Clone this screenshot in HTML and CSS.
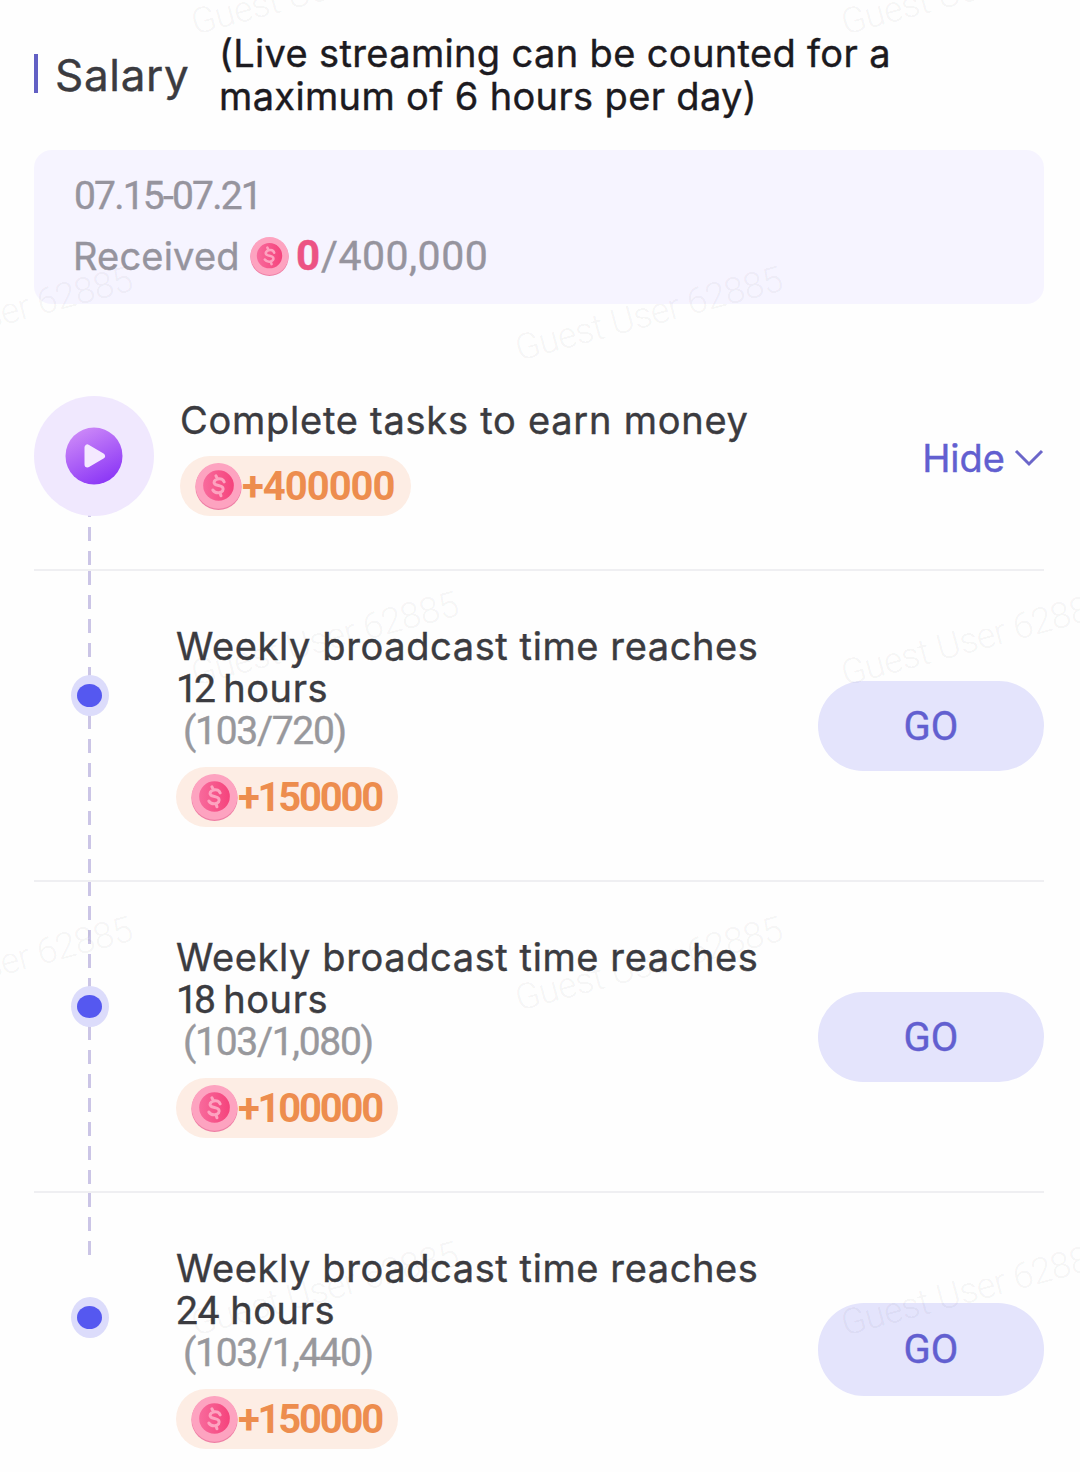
FILE: index.html
```html
<!DOCTYPE html>
<html lang="en">
<head>
    <meta charset="UTF-8">
    <meta name="viewport" content="width=device-width, initial-scale=1.0">
    <title>Salary</title>
    <link rel="stylesheet" href="styles.css">
</head>
<body>
    <!-- Shared icons -->
    <svg class="defs" width="0" height="0">
        <defs>
            <linearGradient id="play-fill" x1="0.2" y1="0" x2="0.7" y2="1">
                <stop offset="0" stop-color="#cf8cf8"/>
                <stop offset="1" stop-color="#8a35f6"/>
            </linearGradient>
            <linearGradient id="coin-fill" x1="0" y1="0" x2="1" y2="0">
                <stop offset="0" stop-color="#f86a9c"/>
                <stop offset="1" stop-color="#f5437c"/>
            </linearGradient>
        </defs>
        <symbol id="coin" viewBox="0 0 46 46">
            <circle cx="23" cy="23.4" r="22.6" fill="#ee7fa5"/>
            <circle cx="23" cy="22.4" r="22.4" fill="#fda3c0"/>
            <circle cx="23" cy="22" r="15" fill="url(#coin-fill)"/>
            <path d="M28.500 18.500c-.8-2.600-3.500-3.700-6.500-2.900-3 .8-4.300 3.400-2.600 5.100 1.800 1.800 6.400 1 7.800 3.400 1.200 2.200-.6 4.400-3.300 4.900-2.600.4-5-.4-6.400-2.500M22 15.600l-1.500-3M24.400 29l1 3" fill="none" stroke="#fda3c0" stroke-width="3" stroke-linecap="round"/>
        </symbol>
    </svg>

    <header class="header">
        <span class="header-bar"></span>
        <h1>Salary</h1>
        <p class="header-note">(Live streaming can be counted for a<br>maximum of 6 hours per day)</p>
    </header>

    <main>
        <section class="summary">
            <p class="summary-date">07.15-07.21</p>
            <p class="summary-received">
                <span class="label">Received</span>
                <svg class="coin-small"><use href="#coin"/></svg>
                <span class="earned">0</span>
                <span class="total">/400,000</span>
            </p>
        </section>

        <section class="tasks">
            <div class="tasks-head">
                <div class="head-icon">
                    <svg width="120" height="120" viewBox="0 0 120 120">
                        <circle cx="60" cy="60" r="60" fill="#f0e8fe"/>
                        <circle cx="60" cy="60" r="28.500" fill="url(#play-fill)"/>
                        <path d="M53.500 51.500v17l14.500-8.500z" fill="#f4e9ff" stroke="#f4e9ff" stroke-width="6" stroke-linejoin="round"/>
                    </svg>
                </div>
                <div class="head-text">
                    <h2>Complete tasks to earn money</h2>
                    <div class="reward reward-total"><svg class="coin"><use href="#coin"/></svg><span>+400000</span></div>
                </div>
                <div class="toggle">
                    <span>Hide</span>
                    <svg width="30" height="18" viewBox="0 0 30 18"><path d="M2 2l13 13L28 2" fill="none" stroke="#6b66c9" stroke-width="3"/></svg>
                </div>
            </div>

            <div class="task">
                <div class="rail"><span class="dot"></span></div>
                <div class="task-text">
                    <h3>Weekly broadcast time reaches<br><span class="hours">12</span> hours</h3>
                    <p class="progress">(103/720)</p>
                    <div class="reward"><svg class="coin"><use href="#coin"/></svg><span>+150000</span></div>
                </div>
                <button class="go">GO</button>
            </div>

            <div class="task">
                <div class="rail"><span class="dot"></span></div>
                <div class="task-text">
                    <h3>Weekly broadcast time reaches<br><span class="hours">18</span> hours</h3>
                    <p class="progress">(103/1,080)</p>
                    <div class="reward"><svg class="coin"><use href="#coin"/></svg><span>+100000</span></div>
                </div>
                <button class="go">GO</button>
            </div>

            <div class="task task-last">
                <div class="rail"><span class="dot"></span></div>
                <div class="task-text">
                    <h3>Weekly broadcast time reaches<br><span class="hours hours-wide">24</span> hours</h3>
                    <p class="progress">(103/1,440)</p>
                    <div class="reward"><svg class="coin"><use href="#coin"/></svg><span>+150000</span></div>
                </div>
                <button class="go">GO</button>
            </div>
        </section>
    </main>

    <!-- Watermark -->
    <svg class="watermark" width="1080" height="1472" viewBox="0 0 1080 1472">
        <text transform="translate(195 35) rotate(-15)">Guest User 62885</text>
        <text transform="translate(845 35) rotate(-15)">Guest User 62885</text>
        <text transform="translate(-131 361) rotate(-15)">Guest User 62885</text>
        <text transform="translate(519 361) rotate(-15)">Guest User 62885</text>
        <text transform="translate(195 686) rotate(-15)">Guest User 62885</text>
        <text transform="translate(845 686) rotate(-15)">Guest User 62885</text>
        <text transform="translate(-131 1011) rotate(-15)">Guest User 62885</text>
        <text transform="translate(519 1011) rotate(-15)">Guest User 62885</text>
        <text transform="translate(195 1336) rotate(-15)">Guest User 62885</text>
        <text transform="translate(845 1336) rotate(-15)">Guest User 62885</text>
    </svg>
</body>
</html>
```

FILE: styles.css
```css
* {
    box-sizing: border-box;
}

body {
    margin: 0;
    padding: 33px 36px 0 34px;
    width: 1080px;
    height: 1472px;
    overflow: hidden;
    position: relative;
    background-color: #fefefe;
    color: #3b3b40;
    font-family: Inter, Roboto, sans-serif;
    font-size: 38px;
    -webkit-text-stroke: 0.4px;
}

h1, h2, h3, p {
    margin: 0;
    font-weight: 400;
    white-space: nowrap;
}

.defs {
    display: block;
}

.header {
    display: flex;
    height: 117px;
}

.header-bar {
    width: 4px;
    height: 39px;
    margin-top: 21px;
    background-color: #6260c4;
}

h1 {
    margin-left: 17px;
    width: 164px;
    padding-top: 17px;
    font-size: 44px;
    line-height: 50px;
    letter-spacing: 0.7px;
}

.header-note {
    margin-top: -1px;
    color: #1c1a20;
    line-height: 42.5px;
    letter-spacing: 0.35px;
}

.summary {
    height: 154px;
    padding: 22px 40px 0;
    background-color: #f6f4ff;
    border-radius: 18px;
    color: #96949e;
}

.summary-date {
    font-family: Roboto, sans-serif;
    font-size: 39px;
    line-height: 48px;
    letter-spacing: -1.8px;
}

.summary-received {
    display: flex;
    align-items: center;
    height: 48px;
    margin-top: 12px;
    line-height: 48px;
}

.label {
    width: 176px;
    margin-left: -1px;
    margin-right: 1px;
    padding-bottom: 1px;
    letter-spacing: 0.2px;
}

.coin-small {
    width: 39px;
    height: 39px;
}

.earned {
    width: 25px;
    margin-left: 7px;
    color: #ec5384;
    font-family: Roboto, sans-serif;
    font-size: 42px;
    font-weight: 700;
}

.total {
    font-family: Roboto, sans-serif;
    font-size: 41px;
    letter-spacing: 0.5px;
}

.tasks {
    margin-top: 92px;
}

.tasks-head {
    display: flex;
    height: 173px;
}

.head-icon {
    width: 120px;
    height: 173px;
    background: repeating-linear-gradient(#cbc5e6 0 14px, transparent 14px 24px) 54px 107px / 3px 63px no-repeat;
}

.head-icon svg {
    display: block;
}

.head-text {
    margin-left: 26px;
}

h2 {
    height: 60px;
    font-size: 38px;
    line-height: 48px;
    letter-spacing: 0.75px;
}

.reward {
    display: flex;
    align-items: center;
    width: 222px;
    height: 60px;
    padding-left: 15px;
    border-radius: 30px;
    background-color: #fdede4;
    color: #ed8d4e;
    font-family: Roboto, sans-serif;
    font-size: 40px;
    font-weight: 700;
    letter-spacing: -2.2px;
    -webkit-text-stroke: 0;
}

.reward-total {
    width: 231px;
    letter-spacing: -1px;
}

.coin {
    flex: none;
    width: 47px;
    height: 47px;
}

.toggle {
    display: flex;
    align-items: center;
    height: 50px;
    margin-top: 37px;
    margin-left: auto;
    color: #625fd0;
    gap: 9px;
}

.task {
    display: flex;
    height: 311px;
    border-top: 2px solid #efeff2;
}

.rail {
    display: flex;
    justify-content: center;
    width: 112px;
    margin-right: 30px;
    padding-top: 104px;
    background: repeating-linear-gradient(#cbc5e6 0 14px, transparent 14px 24px) 54px 0 / 3px 100% no-repeat;
}

.task-last .rail {
    background-size: 3px 62px;
}

.dot {
    width: 38px;
    height: 41px;
    padding: 9px 6px;
    border-radius: 50%;
    background-color: #dcdcfb;
}

.dot::before {
    content: "";
    display: block;
    width: 25px;
    height: 23px;
    border-radius: 50%;
    background-color: #5558f0;
}

.task-text {
    padding-top: 54px;
}

h3 {
    font-size: 38px;
    line-height: 42px;
    letter-spacing: 0.6px;
}

.hours {
    font-family: Roboto, sans-serif;
    font-size: 39px;
    letter-spacing: -4px;
}

.hours-wide {
    letter-spacing: -0.5px;
}

.progress {
    height: 57px;
    padding-left: 7px;
    color: #98989c;
    font-family: Roboto, sans-serif;
    font-size: 39px;
    line-height: 42px;
    letter-spacing: -1.3px;
}

.go {
    width: 226px;
    height: 90px;
    margin: 110px 0 0 auto;
    padding: 0;
    border: none;
    border-radius: 46px;
    background-color: #e4e4fc;
    color: #625fd0;
    font-family: Roboto, sans-serif;
    font-size: 40px;
}

.task-last .go {
    height: 93px;
}

/* Sits over the whole page */
.watermark {
    position: absolute;
    top: 0;
    left: 0;
    fill: rgba(0, 0, 0, 0.05);
    font-family: Roboto, sans-serif;
    font-size: 36px;
    font-weight: 300;
    letter-spacing: -0.5px;
    -webkit-text-stroke: 0;
    pointer-events: none;
}
```
